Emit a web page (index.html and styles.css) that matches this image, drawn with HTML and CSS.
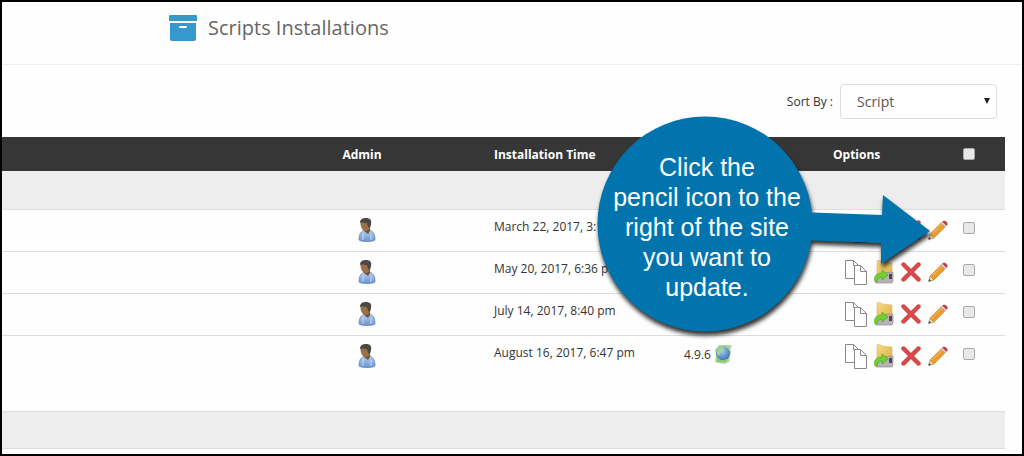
FILE: index.html
```
<!DOCTYPE html>
<html lang="en">
<head>
    <meta charset="UTF-8">
    <meta name="viewport" content="width=device-width, initial-scale=1.0">
    <link rel="stylesheet" href="styles.css">
    <title>Scripts Installations</title>
</head>

<body>
    <!-- icon set -->
    <svg class="defs" aria-hidden="true">
        <defs>
            <linearGradient id="shirt" x1="0" y1="0" x2="0" y2="1">
                <stop offset="0" stop-color="#b4d0f2"/>
                <stop offset="1" stop-color="#6b94cf"/>
            </linearGradient>
            <linearGradient id="folder" x1="0" y1="0" x2="1" y2="1">
                <stop offset="0" stop-color="#f8dc83"/>
                <stop offset="1" stop-color="#e0b24c"/>
            </linearGradient>
            <radialGradient id="globe" cx=".4" cy=".3" r=".7">
                <stop offset="0" stop-color="#a9cdf0"/>
                <stop offset="1" stop-color="#3e76b4"/>
            </radialGradient>
        </defs>
        <symbol id="user" viewBox="0 0 18 24">
            <path d="M1 22c0-6 2-9 6-10h5c4 2 5 5 5 10-3 2-13 2-16 0z" fill="url(#shirt)" stroke="#5a7cac" stroke-width=".7"/>
            <path d="M6 9h6v4l-2 3-4-3z" fill="#76512f"/>
            <path d="M2.500 5c0-3 2-4 5-4s6 2 5 6-2 6-5 6-5-4-5-8z" fill="#9a7049"/>
            <path d="M2 5c0-4 3-5 6-5 4 0 6 2 5 6l-1 4-2-1-1-4c-3 0-5-1-7 0z" fill="#4b4843"/>
            <path d="M5 15v7M13 16v6" stroke="#c5dcf7" fill="none"/>
        </symbol>
        <symbol id="copy" viewBox="0 0 22 25">
            <path d="M.5.5h8l5 5v13H.5z" fill="#fff" stroke="#888"/>
            <path d="M8.500.5v5h5" fill="none" stroke="#888"/>
            <path d="M9.500 5.500h6l6 6v13h-12z" fill="#fff" stroke="#888"/>
            <path d="M15.500 5.500v6h6" fill="none" stroke="#888"/>
        </symbol>
        <symbol id="backup" viewBox="0 0 20 24">
            <path d="M3 1l2-1 3 2 10 1v12H3z" fill="url(#folder)" stroke="#d9b766" stroke-width=".6"/>
            <path d="M8 13l11-1v9l-1 2H2l1-3z" fill="#b8b2b8" stroke="#8a8489" stroke-width=".6"/>
            <path d="M15 14h3v5h-3z" fill="#4b4650"/>
            <path d="M1 22c-2-6 2-9 7-9v-3l6 5-6 5v-3c-3 0-5 2-5 5z" fill="#6fd32f" stroke="#4a9d24" stroke-width=".6"/>
        </symbol>
        <symbol id="remove" viewBox="0 0 20 20">
            <path d="M2.500 2.500l15 15M17.500 2.500l-15 15" stroke="#c93a3c" stroke-width="4.400" stroke-linecap="round"/>
            <path d="M2.500 2.500l15 15M17.500 2.500l-15 15" stroke="#dc4a4b" stroke-width="3" stroke-linecap="round"/>
        </symbol>
        <symbol id="pencil" viewBox="0 0 20 20">
            <path d="M.5 19.500L2 14l4 4z" fill="#ead9a7" stroke="#8b7a58" stroke-width=".6"/>
            <path d="M.5 19.500l.8-2.500 1.700 1.700z" fill="#444"/>
            <path d="M2 14L13 3l4 4L6 18z" fill="#eb9a2c" stroke="#c98330" stroke-width=".6"/>
            <path d="M3.500 14.500L14 4" stroke="#f3b04a" stroke-width="1.400"/>
            <path d="M13 3l2-2 4 4-2 2z" fill="#ddd8d8" stroke="#999" stroke-width=".5"/>
            <path d="M15 1c2-1 5 1 4.500 4L18 5.500 14.500 2z" fill="#c43f4c"/>
        </symbol>
        <symbol id="wp" viewBox="0 0 18 20">
            <path d="M5 1h11l2 1-2 4 1 1-2 11-5 2-9-2 1-6-1-6z" fill="#a9d79a"/>
            <circle cx="9" cy="9.500" r="7" fill="url(#globe)"/>
            <path d="M3 7c2-3 4-4 7-4l-1 3-3 3-1 3-2-2z" fill="#a5d390"/>
            <path d="M3 13c3 4 6 4 9 2l1 3H3z" fill="#8cc577"/>
        </symbol>
    </svg>

    <header class="page-head">
        <svg class="archive" viewBox="0 0 28 26" aria-hidden="true">
            <path d="M1 0h26q1 0 1 1v5H0V1q0-1 1-1z" fill="#3599cd"/>
            <path d="M1 8h26v16q0 2-2 2H3q-2 0-2-2z" fill="#3599cd"/>
            <rect x="10" y="11" width="8" height="2" rx="1" fill="#fff"/>
        </svg>
        <h1>Scripts Installations</h1>
    </header>

    <div class="sort-bar">
        <label for="sortBy">Sort By :</label>
        <div class="select-wrap">
            <select id="sortBy">
                <option>Script</option>
            </select>
            <svg class="caret" viewBox="0 0 6 6" aria-hidden="true"><path d="M0 0h6L3 6z" fill="#222"/></svg>
        </div>
    </div>

    <table class="installs">
        <thead>
            <tr>
                <th></th>
                <th class="admin">Admin</th>
                <th class="time">Installation Time</th>
                <th class="version"></th>
                <th class="options">Options</th>
                <th class="pick"><input type="checkbox" aria-label="Select all"></th>
            </tr>
        </thead>
        <tbody>
            <tr class="group"><td colspan="6"></td></tr>
            <tr>
                <td></td>
                <td class="admin"><a href="#" aria-label="Admin"><svg class="i-user"><use href="#user"/></svg></a></td>
                <td class="time">March 22, 2017, 3:12 pm</td>
                <td class="version"></td>
                <td class="options">
                    <div class="actions">
                        <button aria-label="Clone"><svg class="i-copy"><use href="#copy"/></svg></button>
                        <button aria-label="Backup"><svg class="i-backup"><use href="#backup"/></svg></button>
                        <button aria-label="Remove"><svg class="i-mark"><use href="#remove"/></svg></button>
                        <button aria-label="Edit"><svg class="i-mark"><use href="#pencil"/></svg></button>
                    </div>
                </td>
                <td class="pick"><input type="checkbox" aria-label="Select"></td>
            </tr>
            <tr>
                <td></td>
                <td class="admin"><a href="#" aria-label="Admin"><svg class="i-user"><use href="#user"/></svg></a></td>
                <td class="time">May 20, 2017, 6:36 pm</td>
                <td class="version"></td>
                <td class="options">
                    <div class="actions">
                        <button aria-label="Clone"><svg class="i-copy"><use href="#copy"/></svg></button>
                        <button aria-label="Backup"><svg class="i-backup"><use href="#backup"/></svg></button>
                        <button aria-label="Remove"><svg class="i-mark"><use href="#remove"/></svg></button>
                        <button aria-label="Edit"><svg class="i-mark"><use href="#pencil"/></svg></button>
                    </div>
                </td>
                <td class="pick"><input type="checkbox" aria-label="Select"></td>
            </tr>
            <tr>
                <td></td>
                <td class="admin"><a href="#" aria-label="Admin"><svg class="i-user"><use href="#user"/></svg></a></td>
                <td class="time">July 14, 2017, 8:40 pm</td>
                <td class="version"></td>
                <td class="options">
                    <div class="actions">
                        <button aria-label="Clone"><svg class="i-copy"><use href="#copy"/></svg></button>
                        <button aria-label="Backup"><svg class="i-backup"><use href="#backup"/></svg></button>
                        <button aria-label="Remove"><svg class="i-mark"><use href="#remove"/></svg></button>
                        <button aria-label="Edit"><svg class="i-mark"><use href="#pencil"/></svg></button>
                    </div>
                </td>
                <td class="pick"><input type="checkbox" aria-label="Select"></td>
            </tr>
            <tr class="last">
                <td></td>
                <td class="admin"><a href="#" aria-label="Admin"><svg class="i-user"><use href="#user"/></svg></a></td>
                <td class="time">August 16, 2017, 6:47 pm</td>
                <td class="version"><div class="ver">4.9.6 <svg class="i-wp"><use href="#wp"/></svg></div></td>
                <td class="options">
                    <div class="actions">
                        <button aria-label="Clone"><svg class="i-copy"><use href="#copy"/></svg></button>
                        <button aria-label="Backup"><svg class="i-backup"><use href="#backup"/></svg></button>
                        <button aria-label="Remove"><svg class="i-mark"><use href="#remove"/></svg></button>
                        <button aria-label="Edit"><svg class="i-mark"><use href="#pencil"/></svg></button>
                    </div>
                </td>
                <td class="pick"><input type="checkbox" aria-label="Select"></td>
            </tr>
        </tbody>
    </table>
    <div class="next-group"></div>

    <!-- hint bubble over the table -->
    <div class="callout">
        <svg class="callout-shape" viewBox="0 0 332 216" aria-hidden="true">
            <circle cx="107" cy="108" r="107.500" fill="#0274ad"/>
            <path d="M200 96l84 3 1-20 47 36-49 33v-21l-82-3z" fill="#0274ad"/>
        </svg>
        <p>Click the<br>pencil icon to the<br>right of the site<br>you want to<br>update.</p>
    </div>
</body>
</html>
```
FILE: styles.css
```
* {
    box-sizing: border-box;
}
body {
    position: relative;
    margin: 0;
    min-height: 100vh;
    border: 2px solid #000;
    background-color: #fefefe;
    color: #333;
    font-family: "Open Sans", "Noto Sans", sans-serif;
    font-size: 12px;
}
.defs {
    position: absolute;
    width: 0;
    height: 0;
}
.page-head {
    display: flex;
    align-items: center;
    gap: 11px;
    height: 63px;
    padding: 0 0 10px 167px;
    border-bottom: 1px solid #eee;
}
.page-head h1 {
    margin: 0 0 2px;
    font-size: 20px;
    font-weight: 400;
    color: #666;
}
.archive {
    width: 28px;
    height: 26px;
}
.sort-bar {
    display: flex;
    justify-content: flex-end;
    align-items: center;
    gap: 7px;
    height: 72px;
    padding: 0 25px 0 0;
}
.select-wrap {
    position: relative;
    width: 157px;
}
.select-wrap select {
    display: block;
    width: 100%;
    height: 35px;
    padding: 0 16px;
    appearance: none;
    border: 1px solid #ddd;
    border-radius: 4px;
    background-color: #fff;
    color: #555;
    font-family: inherit;
    font-size: 14px;
}
.caret {
    position: absolute;
    top: 14px;
    right: 7px;
    width: 6px;
    height: 6px;
}

.installs {
    width: calc(100% - 17px);
    table-layout: fixed;
    border-collapse: collapse;
}
.installs th {
    height: 34px;
    padding: 0;
    background-color: #363636;
    color: #fff;
    font-size: 12px;
    text-align: left;
}
.installs td {
    height: 42px;
    padding: 0;
    border-bottom: 1px solid #ddd;
}
.installs .group td {
    height: 38px;
    background-color: #ededed;
}
.installs .last td {
    border-bottom: 0;
}
.installs .admin {
    width: 240px;
    text-align: center;
}
.installs td.admin {
    padding-left: 10px;
}
.installs .time {
    width: 190px;
    padding-left: 12px;
    white-space: nowrap;
}
.installs td.time {
    padding-bottom: 8px;
}
.installs .version {
    width: 149px;
    padding-left: 12px;
}
.installs td.version {
    padding-bottom: 4px;
}
.installs .options {
    width: 130px;
    padding-left: 12px;
}
.installs td.options {
    padding-left: 24px;
}
.installs .pick {
    width: 54px;
    padding-left: 12px;
}
.installs td.pick {
    padding-bottom: 4px;
}
.pick input {
    display: block;
    appearance: none;
    width: 12px;
    height: 12px;
    margin: 0;
    border: 1px solid #aaa;
    border-radius: 2px;
    background-color: #e8e8e8;
}
.ver {
    display: flex;
    align-items: center;
    gap: 3px;
}
.actions {
    display: flex;
    align-items: center;
    gap: 7px;
}
.actions button {
    display: block;
    padding: 0;
    border: 0;
    background: none;
}
.installs svg {
    display: block;
}
.installs .i-user {
    width: 18px;
    height: 24px;
    margin: 0 auto;
}
.i-copy {
    width: 22px;
    height: 25px;
}
.i-backup {
    width: 20px;
    height: 24px;
}
.i-mark {
    width: 20px;
    height: 20px;
}
.i-wp {
    width: 18px;
    height: 20px;
}
.next-group {
    height: 38px;
    margin: 34px 17px 4px 0;
    border-top: 1px solid #ddd;
    border-bottom: 1px solid #ddd;
    background-color: #ededed;
}

.callout {
    position: absolute;
    top: 114px;
    right: 92px;
    width: 332px;
    height: 216px;
}
.callout-shape {
    position: absolute;
    inset: 0;
    width: 100%;
    height: 100%;
    overflow: visible;
    filter: drop-shadow(1px 4px 2px #000c);
}
.callout p {
    position: relative;
    width: 218px;
    margin: 0;
    padding-top: 36px;
    color: #fff;
    font-family: "Liberation Sans", Arial, sans-serif;
    font-size: 25px;
    line-height: 30px;
    text-align: center;
}
```
